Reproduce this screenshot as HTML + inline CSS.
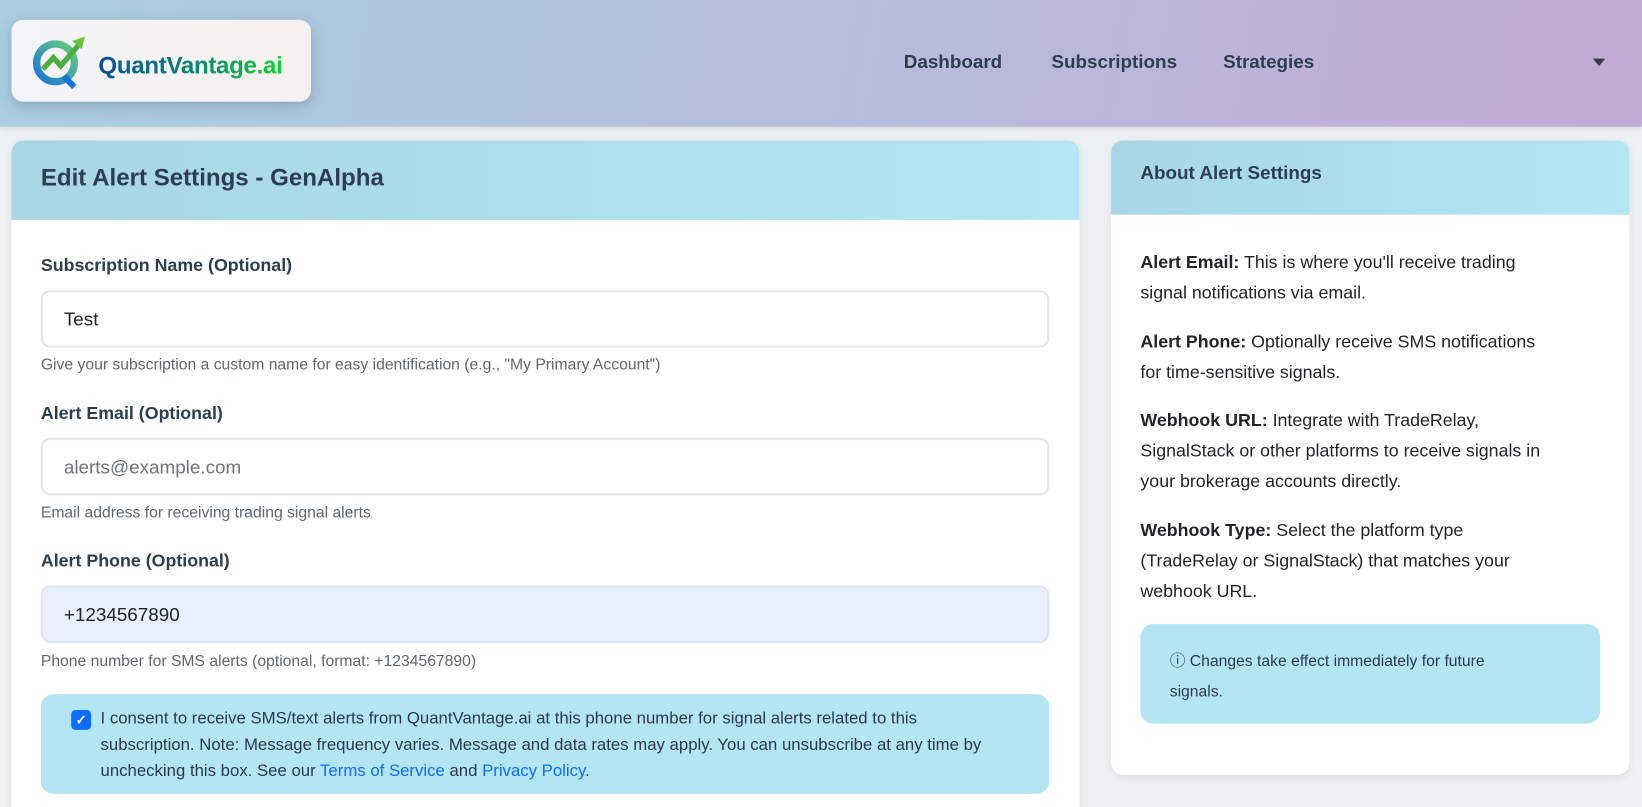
<!DOCTYPE html>
<html><head><meta charset="utf-8"><style>
*{box-sizing:border-box;margin:0;padding:0}
html,body{width:1642px;height:807px;overflow:hidden;background:#eef1f4}
#w{width:1568px;height:771px;overflow:hidden;transform:scale(1.04719);transform-origin:0 0;position:relative;font-family:"Liberation Sans",Arial,sans-serif;color:#212529}
.hdr{position:absolute;left:0;top:0;width:1568px;height:121px;background:linear-gradient(100deg,#a9cfe0 0%,#b6bedc 50%,#c3a9d6 100%);box-shadow:0 2px 4px rgba(0,0,0,.08)}
.logo{position:absolute;left:11px;top:19px;width:286px;height:78px;background:linear-gradient(90deg,#f3f5f8,#f7f0ef);border-radius:11px;box-shadow:0 4px 12px rgba(60,80,110,.3)}
.logo .t{position:absolute;left:83px;top:30px;font-size:23px;font-weight:bold;background:linear-gradient(90deg,#0d4e9c,#0a8a6e 55%,#10d430);-webkit-background-clip:text;color:transparent;letter-spacing:-.3px}
.nav{position:absolute;top:49px;font-size:18px;color:#2c3e50;font-weight:600}
.card{position:absolute;background:#fff;border-radius:12px;overflow:hidden;box-shadow:0 2px 8px rgba(0,0,0,.08)}
.ch{background:linear-gradient(90deg,#a8d6e4,#b4e6f4);color:#2c3e50}
label{display:block;font-weight:bold;font-size:17px;color:#2c3e50;position:absolute;left:28px}
.in{position:absolute;left:28px;width:963px;height:55px;border:2px solid #e3e7eb;border-radius:9px;font-size:18px;padding:16px 20px;color:#212529}
.hint{position:absolute;left:28px;font-size:15px;color:#5f6870}
.rp{position:absolute;left:28px;font-size:17px;line-height:29px;width:395px;color:#212529}
a{color:#0d6efd}
</style></head><body><div id="w">
<div class="hdr">
<div class="logo">
<svg style="position:absolute;left:20px;top:14px" width="60" height="56" viewBox="0 0 60 56">
<defs><linearGradient id="g" x1="0" y1="1" x2="1" y2="0"><stop offset="0" stop-color="#1a74d8"/><stop offset="1" stop-color="#6ad07a"/></linearGradient></defs>
<circle cx="22" cy="27" r="18" fill="none" stroke="url(#g)" stroke-width="7"/>
<path d="M30 40 L40 50" stroke="#1a74d8" stroke-width="6"/>
<path d="M10 33 L20 22 L27 30 L44 10" fill="none" stroke="#4cae3c" stroke-width="5"/>
<path d="M38 6 L50 2 L47 14 Z" fill="#6ac33c"/>
</svg>
<div class="t">QuantVantage.ai</div></div>
<div class="nav" style="left:863px">Dashboard</div>
<div class="nav" style="left:1004px">Subscriptions</div>
<div class="nav" style="left:1168px">Strategies</div>
<div style="position:absolute;left:1521px;top:56px;border-left:6px solid transparent;border-right:6px solid transparent;border-top:7px solid #2c3e50"></div>
</div>

<div class="card" style="left:11px;top:134px;width:1020px;height:660px">
<div class="ch" style="height:76px;padding:22px 28px;font-size:23px;font-weight:600">Edit Alert Settings - GenAlpha</div>
<label style="top:110px">Subscription Name (Optional)</label>
<div class="in" style="top:143px">Test</div>
<div class="hint" style="top:206px">Give your subscription a custom name for easy identification (e.g., "My Primary Account")</div>
<label style="top:251px">Alert Email (Optional)</label>
<div class="in" style="top:284px;color:#6c757d">alerts@example.com</div>
<div class="hint" style="top:347px">Email address for receiving trading signal alerts</div>
<label style="top:392px">Alert Phone (Optional)</label>
<div class="in" style="top:425px;background:#e8f0fe;border-color:#dde5f2">+1234567890</div>
<div class="hint" style="top:489px">Phone number for SMS alerts (optional, format: +1234567890)</div>
<div style="position:absolute;left:28px;top:529px;width:963px;height:95px;background:#b4e5f2;border-radius:12px">
<div style="position:absolute;left:29px;top:15px;width:19px;height:19px;background:#0d6efd;border-radius:4px;color:#fff;font-size:13px;text-align:center;line-height:19px;font-weight:bold">✓</div>
<div style="position:absolute;left:57px;top:11px;width:852px;font-size:16px;line-height:25px;color:#2b3a48">I consent to receive SMS/text alerts from QuantVantage.ai at this phone number for signal alerts related to this subscription. Note: Message frequency varies. Message and data rates may apply. You can unsubscribe at any time by unchecking this box. See our <a>Terms of Service</a> and <a>Privacy Policy</a>.</div>
</div>
</div>

<div class="card" style="left:1061px;top:134px;width:495px;height:606px">
<div class="ch" style="height:71px;padding:21px 28px;font-size:18px;font-weight:600">About Alert Settings</div>
<div class="rp" style="top:102px"><b>Alert Email:</b> This is where you'll receive trading signal notifications via email.</div>
<div class="rp" style="top:178px"><b>Alert Phone:</b> Optionally receive SMS notifications for time-sensitive signals.</div>
<div class="rp" style="top:253px"><b>Webhook URL:</b> Integrate with TradeRelay, SignalStack or other platforms to receive signals in your brokerage accounts directly.</div>
<div class="rp" style="top:358px"><b>Webhook Type:</b> Select the platform type (TradeRelay or SignalStack) that matches your webhook URL.</div>
<div style="position:absolute;left:28px;top:462px;width:439px;height:95px;background:#b4e5f2;border-radius:12px;padding:21px 28px;font-size:15px;line-height:29px;color:#2b3a48"><div style="width:330px">ⓘ Changes take effect immediately for future signals.</div></div>
</div>
</div></body></html>
